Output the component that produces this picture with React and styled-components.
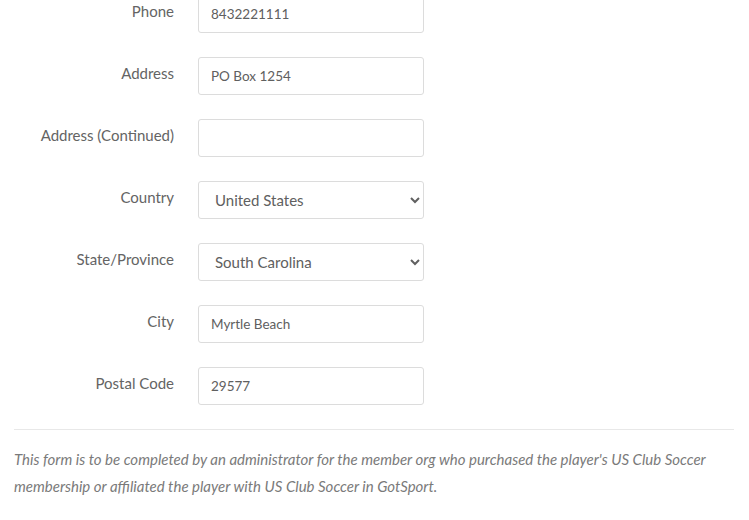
import React from "react";
import styled, { createGlobalStyle } from "styled-components";

const GlobalStyle = createGlobalStyle`
  body {
    margin: 0;
    background: #fff;
    font-family: Lato, "Open Sans", sans-serif;
    color: #555;
  }
`;

const Page = styled.div`
  padding: 0 15px 0 14px;
  margin-top: -5px;
`;

const Form = styled.div`
  display: flex;
  flex-direction: column;
  gap: 24px;
`;

const Row = styled.div`
  display: grid;
  grid-template-columns: 160px 226px;
  column-gap: 24px;
  align-items: start;
`;

const Label = styled.label`
  text-align: right;
  font-size: 15px;
  line-height: 20px;
  padding-top: 6px;
  color: #646464;
`;

const Input = styled.input`
  box-sizing: border-box;
  width: 100%;
  height: 38px;
  padding: 0 12px;
  border: 1px solid #dcdcdc;
  border-radius: 3px;
  font-family: inherit;
  font-size: 13.5px;
  color: #606060;
  background: #fff;
  outline: none;
`;

const Select = styled.select`
  box-sizing: border-box;
  width: 100%;
  height: 38px;
  padding: 0 12px;
  border: 1px solid #dcdcdc;
  border-radius: 3px;
  font-family: inherit;
  font-size: 15px;
  line-height: 20px;
  color: #606060;
  background: #fff;
  outline: none;
`;

const Divider = styled.hr`
  border: 0;
  border-top: 1px solid #e8e8e8;
  margin: 24px 0 0;
`;

const Note = styled.p`
  margin: 16px 0 0;
  font-style: italic;
  font-size: 15px;
  line-height: 27px;
  color: #7a7a7a;
`;

const fields = [
  { label: "Phone", value: "8432221111" },
  { label: "Address", value: "PO Box 1254" },
  { label: "Address (Continued)", value: "" },
  { label: "Country", select: "United States" },
  { label: "State/Province", select: "South Carolina" },
  { label: "City", value: "Myrtle Beach" },
  { label: "Postal Code", value: "29577" },
];

export default function App() {
  return (
    <>
      <GlobalStyle />
      <Page>
        <Form>
          {fields.map((f) => (
            <Row key={f.label}>
              <Label>{f.label}</Label>
              {f.select ? (
                <Select defaultValue={f.select}>
                  <option>{f.select}</option>
                </Select>
              ) : (
                <Input type="text" defaultValue={f.value} />
              )}
            </Row>
          ))}
        </Form>
        <Divider />
        <Note>
          This form is to be completed by an administrator for the member org who
          purchased the player's US Club Soccer membership or affiliated the
          player with US Club Soccer in GotSport.
        </Note>
      </Page>
    </>
  );
}
